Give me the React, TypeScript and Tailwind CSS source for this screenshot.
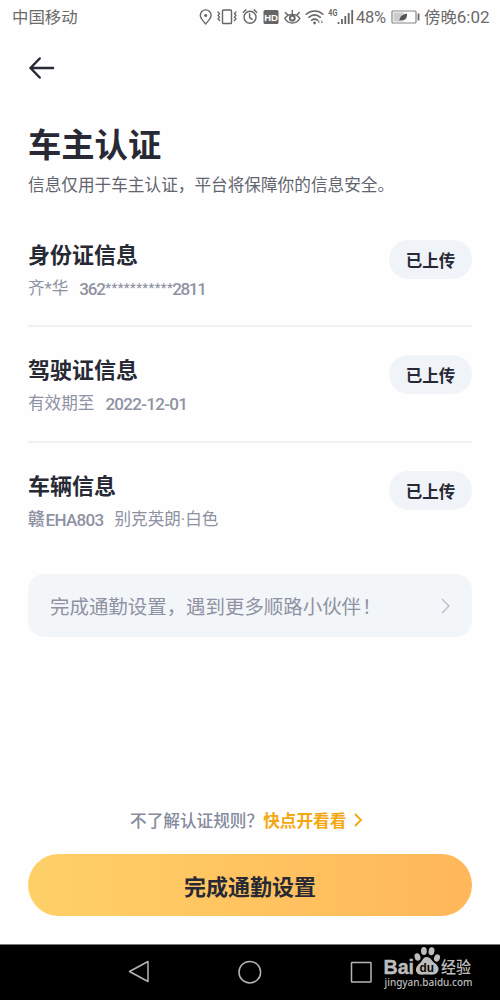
import type { ReactNode } from "react";

interface InfoRow {
    title: string;
    detail: ReactNode;
    height: string;
}

const rows: InfoRow[] = [
    {
        title: "身份证信息",
        height: "h-[88px]",
        detail: (
            <>
                <span>齐*华</span>
                <span className="ml-[11px] flex text-[17px] font-medium tracking-[-1.2px]">
                    <span className="w-[26px]">362</span>
                    <span className="w-[67px] text-[13px] leading-[22px] tracking-[0.4px]">***********</span>
                    <span className="tracking-[-1.4px]">2811</span>
                </span>
            </>
        ),
    },
    {
        title: "驾驶证信息",
        height: "h-[89px]",
        detail: (
            <>
                <span>有效期至</span>
                <span className="ml-[11px] text-[17px] font-medium tracking-[-0.7px]">2022-12-01</span>
            </>
        ),
    },
    {
        title: "车辆信息",
        height: "h-[104px]",
        detail: (
            <>
                <b>赣</b>
                <span className="ml-[1px] text-[17px] font-medium tracking-[-0.7px]">EHA803</span>
                <span className="ml-[11px]">别克英朗·白色</span>
            </>
        ),
    },
];

function StatusBar() {
    return (
        <div className="flex h-[34px] shrink-0 items-center pl-[12px] text-[16.4px] text-[#6b6b6b]">
            <span className="w-[186px] pt-[2px]">中国移动</span>
            <svg width="156" height="34" viewBox="198 0 156 34" fill="none" stroke="#666" strokeWidth="1.4" strokeLinecap="round" strokeLinejoin="round">
                {/* location */}
                <path d="M205.700 24c-2.600-3.200-5.400-5.600-5.400-8.700a5.400 5.400 0 0 1 10.800 0c0 3.100-2.800 5.500-5.400 8.700z" />
                <circle cx="205.700" cy="15.500" r="1.500" fill="#666" stroke="none" />
                {/* vibrate */}
                <rect x="222.500" y="10" width="9" height="13.500" rx="0.800" />
                <path d="M218 12l1.600 1.700-1.600 1.700 1.600 1.700-1.600 1.700 1.600 1.700M236 12l-1.600 1.700 1.600 1.700-1.600 1.700 1.600 1.700-1.600 1.700" strokeWidth="1.300" />
                {/* alarm */}
                <circle cx="250" cy="17.300" r="6" />
                <path d="M249.600 13.800v3.800l2.500 1.700M243.300 12.500a7 7 0 0 1 2.700-2.600M256.700 12.500a7 7 0 0 0-2.700-2.600" />
                {/* HD */}
                <rect x="263.500" y="10" width="15" height="14" rx="1.500" fill="#666" stroke="none" />
                <text x="271" y="20.800" textAnchor="middle" fill="#fff" stroke="none" fontSize="9.500" fontWeight="700" fontFamily="Liberation Sans, sans-serif">HD</text>
                {/* eye */}
                <path d="M284.800 18.500c3.500-5.500 11.500-5.500 15 0-3.500 6-11.500 6-15 0zM292.300 10.500v3M285.300 12.500l2.200 2.300M299.300 12.500l-2.200 2.300" />
                <circle cx="292.300" cy="18.200" r="2.400" strokeWidth="2" />
                {/* wifi */}
                <path d="M306.200 14.200c5-4.400 11.800-4.400 16.800 0M308.800 17.300c3.600-3 8-3 11.600 0M311.500 20.300c2-1.500 4.200-1.500 6.200 0" strokeWidth="1.500" />
                <circle cx="314.600" cy="23" r="1.400" fill="#666" stroke="none" />
                <path d="M319.300 20.300v3.200l-1.700-1.600zM321.300 20.300v3.200l1.700-1.600z" fill="#777" stroke="none" />
                {/* mobile signal */}
                <text x="328.300" y="16" fill="#666" stroke="none" fontSize="9" fontWeight="700" textLength="9" lengthAdjust="spacingAndGlyphs" fontFamily="Roboto, sans-serif">4G</text>
                <path d="M338.500 22v2M342 19v5M345.300 16v8M348.700 13v11M352.200 10v14" strokeWidth="1.800" strokeLinecap="butt" />
            </svg>
            <span className="ml-[2px] w-[35px] pt-[2px] text-[16.5px] tracking-[-0.3px]">48%</span>
            <svg width="29" height="16" viewBox="0 0 29 16" fill="none">
                <rect x="1" y="2" width="24" height="12" rx="1" stroke="#858585" strokeWidth="1.200" />
                <rect x="2.500" y="3.500" width="10" height="9" fill="#ccc" />
                <path d="M27.500 4.500v7" stroke="#666" strokeWidth="1.800" />
                <path d="M8.500 12c0-4 2.500-6.700 7.500-7.500.3 5-2.200 7.500-6 6.500z" fill="#555" />
            </svg>
            <span className="ml-[4px] pt-[2px] whitespace-nowrap">傍晚<span className="text-[17px]">6:02</span></span>
        </div>
    );
}

function NavBar() {
    return (
        <div className="flex h-[56px] shrink-0 border-t border-[#777] bg-black">
            <svg width="500" height="55" viewBox="0 945 500 55" fill="none">
                <g stroke="#b5b5b5" strokeWidth="1.500">
                    <path d="M148 961.500v20L129.500 971.500z" strokeLinejoin="round" />
                    <circle cx="249.800" cy="972.200" r="10.800" />
                    <rect x="351.500" y="962.500" width="19.500" height="19.500" rx="0.500" />
                </g>
                {/* watermark */}
                <g fill="#bdbdbd">
                    <text x="383.500" y="974" fontSize="20.500" fontWeight="700" textLength="30.500" lengthAdjust="spacingAndGlyphs" fontFamily="Liberation Sans, sans-serif" stroke="#bdbdbd" strokeWidth="0.400">Bai</text>
                    <ellipse cx="417.500" cy="957" rx="2.900" ry="3.800" transform="rotate(-15 417.500 957)" />
                    <ellipse cx="423.900" cy="951" rx="2.900" ry="3.900" />
                    <ellipse cx="431.500" cy="951.200" rx="2.900" ry="4" transform="rotate(10 431.500 951.200)" />
                    <ellipse cx="437" cy="958" rx="2.900" ry="3.700" transform="rotate(20 437 958)" />
                    <path d="M426.500 957c3.700 0 5 3.300 7.500 5.600 3.700 2.900 5.600 5.400 4.100 8.700-2 4.500-6.900 3.300-11.300 3.300-4.300 0-8.500 1.200-10.300-2.500-1.700-3.700.8-6.600 3.800-9.300 2.300-2 2.800-5.800 6.200-5.800z" />
                    <text x="419.500" y="972.300" fill="#050505" fontSize="13" fontWeight="700" textLength="14.500" lengthAdjust="spacingAndGlyphs" fontFamily="Liberation Sans, sans-serif">du</text>
                    <text x="441" y="972.500" fontSize="15.500" fontWeight="500" textLength="30" lengthAdjust="spacingAndGlyphs" fontFamily="Noto Sans CJK SC, sans-serif">经验</text>
                    <text x="384.500" y="985.800" fontSize="10.500" fontWeight="500" textLength="88" lengthAdjust="spacingAndGlyphs" fontFamily="Noto Sans, sans-serif">jingyan.baidu.com</text>
                </g>
            </svg>
        </div>
    );
}

function App() {
    return (
        <div className="flex h-[1000px] w-[500px] flex-col overflow-hidden bg-[#fefefe] font-[Roboto,'Noto_Sans_CJK_SC',sans-serif] text-[#272a35]">
            <StatusBar />
            <main className="flex flex-1 flex-col px-[28px]">
                <button className="mt-[22px] h-[24px] w-[28px]" aria-label="返回">
                    <svg width="28" height="24" viewBox="0 0 28 24" fill="none" stroke="#272a35" strokeWidth="2.500" strokeLinecap="round" strokeLinejoin="round">
                        <path d="M25 12H2.500M11.700 2.500L2.500 12l9.200 9.500" />
                    </svg>
                </button>
                <h1 className="mt-[42px] h-[48px] text-[33.3px] leading-[48px] font-bold">车主认证</h1>
                <p className="mt-[4px] h-[24px] text-[16.65px] leading-[24px] whitespace-nowrap text-[#62656f]">
                    信息仅用于车主认证，平台将保障你的信息安全。
                </p>

                <section className="mt-[41px]">
                    {rows.map((row, i) => (
                        <div
                            key={row.title}
                            className={`flex justify-between ${row.height} ${i < 2 ? "mb-[27px] border-b-2 border-[#f0f0f3]" : ""}`}
                        >
                            <div className="pt-[1px]">
                                <h2 className="h-[32px] text-[22px] leading-[32px] font-bold">{row.title}</h2>
                                <div className="mt-[5px] flex h-[24px] text-[16.6px] leading-[24px] whitespace-nowrap text-[#8e92a3]">
                                    {row.detail}
                                </div>
                            </div>
                            <button className="mt-[1px] h-[39px] w-[83px] rounded-full bg-[#f0f3f8] pt-[3px] text-[16.5px] leading-[35px] font-bold">
                                已上传
                            </button>
                        </div>
                    ))}
                </section>

                <div className="flex h-[63px] items-center justify-between rounded-[16px] bg-[#f3f6f9] pr-[21px] pl-[22px] text-[19.45px] text-[#8e92a3]">
                    <span className="pt-[4px] whitespace-nowrap">完成通勤设置，遇到更多顺路小伙伴<span className="ml-[1px]">！</span></span>
                    <svg width="12" height="18" viewBox="0 0 12 18" fill="none" stroke="#b5b9c3" strokeWidth="1.200">
                        <path d="M3 2l7 7-7 7" />
                    </svg>
                </div>

                <div className="mt-auto flex h-[24px] items-center pl-[102px] text-[16.65px] font-medium whitespace-nowrap text-[#858a9d]">
                    <span className="pt-[5px]">不了解认证规则？</span>
                    <span className="pt-[5px] font-bold text-[#f5a710]">快点开看看</span>
                    <svg className="ml-[7px]" width="10" height="16" viewBox="0 0 10 16" fill="none" stroke="#f5a710" strokeWidth="1.800">
                        <path d="M2 2l6 6-6 6" />
                    </svg>
                </div>
                <button className="mt-[22px] mb-[28px] h-[62px] w-full rounded-full bg-linear-to-r from-[#ffd068] to-[#ffb759] pt-[4px] text-[22px] font-bold">
                    完成通勤设置
                </button>
            </main>
            <NavBar />
        </div>
    );
}

export default App;
